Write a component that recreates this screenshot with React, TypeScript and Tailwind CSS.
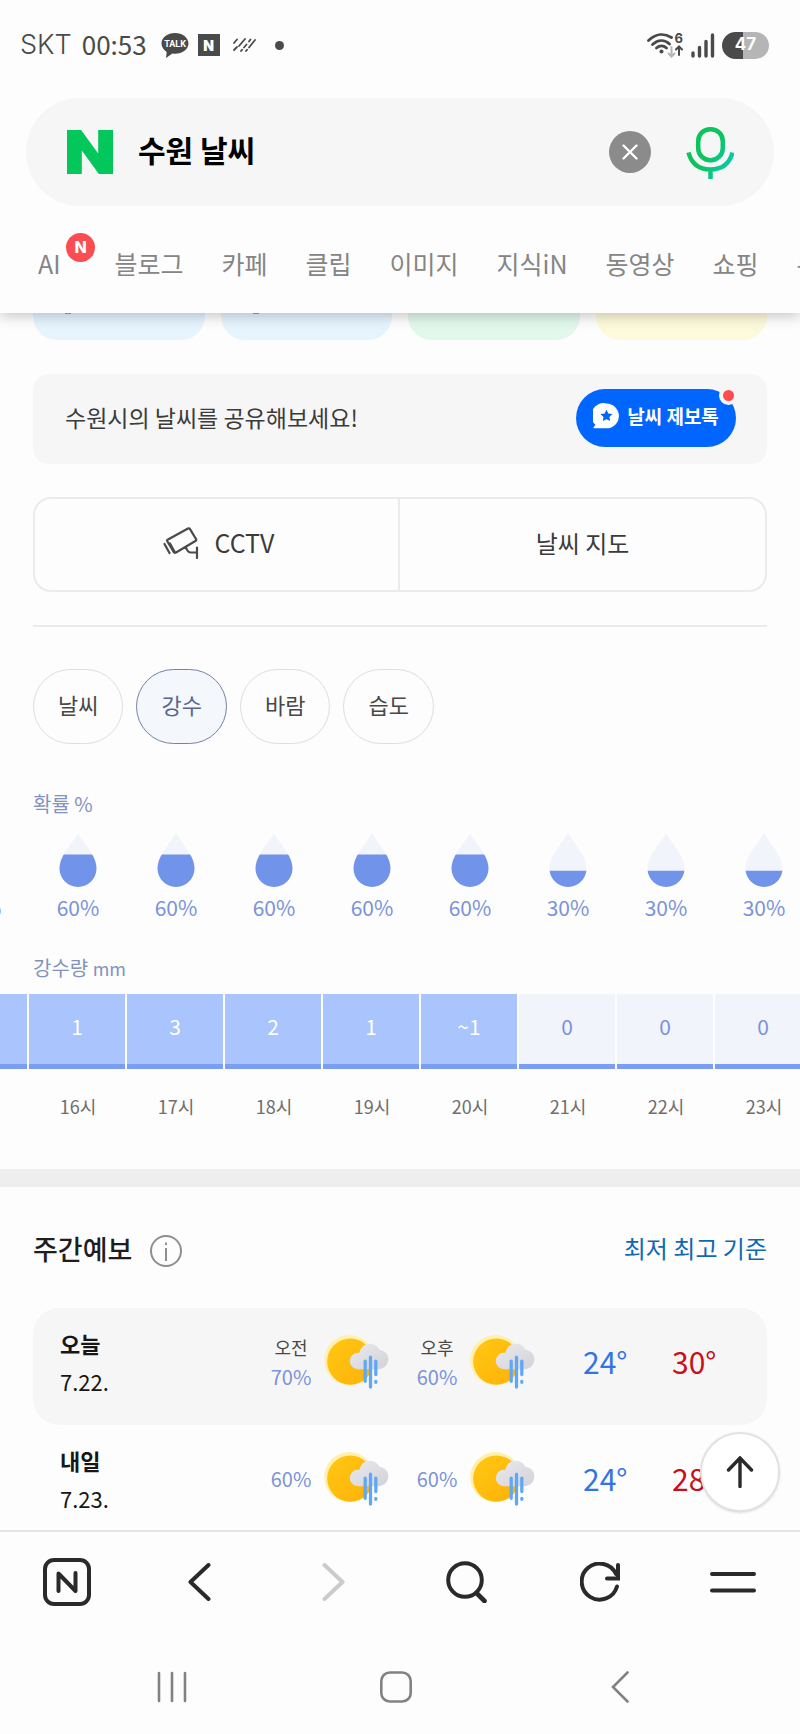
import { useState } from "react";
import { SiNaver } from "react-icons/si";

const TABS = ["블로그", "카페", "클립", "이미지", "지식iN", "동영상", "쇼핑", "뉴스"];

const CHIPS = ["날씨", "강수", "바람", "습도"];

const HOURS = [
  { time: "15시", chance: 60, rain: "1" },
  { time: "16시", chance: 60, rain: "1" },
  { time: "17시", chance: 60, rain: "3" },
  { time: "18시", chance: 60, rain: "2" },
  { time: "19시", chance: 60, rain: "1" },
  { time: "20시", chance: 60, rain: "~1" },
  { time: "21시", chance: 30, rain: "0" },
  { time: "22시", chance: 30, rain: "0" },
  { time: "23시", chance: 30, rain: "0" },
];

const DAYS = [
  { name: "오늘", date: "7.22.", am: 70, pm: 60, low: 24, high: 30, today: true },
  { name: "내일", date: "7.23.", am: 60, pm: 60, low: 24, high: 28, today: false },
];

const StatusBar = () => (
  <div className="flex h-[98px] items-center justify-between pr-[31px] pb-2 pl-[20px] text-[#4a4a4a]">
    <div className="flex items-center">
      <span className="font-['Inter','Noto_Sans_CJK_KR',sans-serif] text-[27px] font-light">SKT</span>
      <span className="ml-[10px] pb-1 text-[26px]">00:53</span>
      <svg className="ml-[14px] h-[27px] w-7" viewBox="0 0 28 27" role="img" aria-label="카카오톡">
        <path d="M14 1C6.500 1 .5 5.600.5 11.500c0 3.600 2.100 6.600 5.200 8.400L5 26l6.300-4.400c.9.100 1.800.2 2.700.2 7.500 0 13.500-4.600 13.500-10.300S21.500 1 14 1z" fill="#4a4a4a" />
        <text x="14" y="15" textAnchor="middle" fontSize="9" fontWeight="700" fill="#fff" fontFamily="Roboto, sans-serif">
          TALK
        </text>
      </svg>
      <span className="ml-[9px] flex size-[22px] items-center justify-center bg-[#4a4a4a] font-['Inter',sans-serif] text-[14px] font-black text-white">
        N
      </span>
      <svg className="ml-3 h-4 w-6" viewBox="0 0 24 16" fill="none" stroke="#4a4a4a" strokeWidth="1.800" strokeLinecap="round">
        <path d="M2 6l3-3.500M2 13l3-3M7 9l6-7M9 14l1-1.200M12 10.500l2.500-3M17 4.500l1.500-2M14 14l1-1.200M17 10.500l6-7.500" />
      </svg>
      <span className="ml-[19px] size-[9px] rounded-full bg-[#4a4a4a]" />
    </div>

    <div className="flex items-center">
      <svg className="h-[28px] w-9" viewBox="0 0 36 28" fill="none" stroke="#4a4a4a" strokeWidth="2.800" strokeLinecap="round">
        <path d="M1.500 9.500c7.500-7.300 16-7.300 23-3M5.500 13.500c5.500-5 12-5 17-.5M9.500 17c3-2.800 7-2.800 10 0" />
        <circle cx="14.500" cy="20.500" r="2" fill="#4a4a4a" stroke="none" />
        <path d="M24.500 16v9M21.500 22.500l3 3 3-3" stroke="#b5b5b5" strokeWidth="2" />
        <path d="M32 24v-8M29 18.500l3-3 3 3" strokeWidth="2" />
        <text x="27.500" y="12" fontSize="13" fontWeight="700" fill="#4a4a4a" stroke="none" fontFamily="Inter, sans-serif">
          6
        </text>
      </svg>
      <svg className="ml-2 h-[27px] w-6" viewBox="0 0 24 27" fill="none" stroke="#4a4a4a" strokeWidth="3.400" strokeLinecap="round">
        <path d="M2 21v3M8.500 15.500V24M15 9.500V24M21.500 3v21" />
      </svg>
      <span className="ml-[7px] flex h-[27px] w-[47px] items-center justify-center rounded-full bg-linear-to-r from-[#4a4a4a] from-45% to-[#b5b5b5] to-45% font-['Inter',sans-serif] text-[17px] font-bold text-white">
        47
      </span>
    </div>
  </div>
);

const SearchBar = () => {
  const [query, setQuery] = useState("수원 날씨");

  return (
    <form className="mx-[26px] flex h-[108px] items-center rounded-full bg-[#f6f6f6] pr-[40px] pl-[41px]">
      <SiNaver className="h-11 w-[46px] shrink-0 text-[#03c75a]" preserveAspectRatio="none" />
      <input
        aria-label="검색어"
        value={query}
        onChange={(e) => setQuery(e.target.value)}
        className="ml-[25px] min-w-0 flex-1 bg-transparent pb-[6px] text-[30px] font-bold text-black outline-none"
      />
      <button
        type="button"
        aria-label="지우기"
        onClick={() => setQuery("")}
        className="flex size-[42px] items-center justify-center rounded-full bg-[#8b8b8b]"
      >
        <svg className="size-4" viewBox="0 0 16 16" fill="none" stroke="#fff" strokeWidth="2.400" strokeLinecap="round">
          <path d="M1.500 1.500l13 13M14.500 1.500l-13 13" />
        </svg>
      </button>
      <button type="button" aria-label="음성 검색" className="ml-[35px]">
        <svg className="h-[53px] w-12" viewBox="0 0 48 53" fill="none" stroke="url(#mic)" strokeWidth="4.500">
          <defs>
            <linearGradient id="mic" gradientUnits="userSpaceOnUse" x1="8" y1="20" x2="46" y2="44">
              <stop offset="0.350" stopColor="#0dc35c" />
              <stop offset="1" stopColor="#06cbb4" />
            </linearGradient>
          </defs>
          <rect x="12.200" y="3.200" width="24.600" height="31" rx="12" />
          <path d="M2.500 26.500C5.500 38 13.500 43.500 24.500 43.500S43.500 38 46.500 26.500M24.500 43.500V53" />
        </svg>
      </button>
    </form>
  );
};

const SearchTabs = () => (
  <nav className="flex h-[107px] items-center gap-[38px] overflow-hidden pt-2 pl-[38px] text-[25px] whitespace-nowrap text-[#858585]">
    <a href="#ai" className="relative mr-4">
      AI
      <span className="absolute -top-3 left-7 flex size-[29px] items-center justify-center rounded-full bg-[#fb4c51] font-['Inter',sans-serif] text-[16px] font-extrabold text-white">
        N
      </span>
    </a>
    {TABS.map((tab) => (
      <a key={tab} href={`#${tab}`}>
        {tab}
      </a>
    ))}
  </nav>
);

const SummaryCards = () => (
  <div className="grid h-[27px] grid-cols-4 gap-4">
    <div className="rounded-b-[24px] bg-[#e6f4fe] pl-8">
      <span className="block h-px w-[6px] bg-gray-400" />
    </div>
    <div className="rounded-b-[24px] bg-[#e6f4fe] pl-8">
      <span className="block h-px w-[6px] bg-gray-400" />
    </div>
    <div className="rounded-b-[24px] bg-[#e2f8eb]" />
    <div className="rounded-b-[24px] bg-[#fdfadb]" />
  </div>
);

const ShareBanner = () => (
  <div className="mt-[34px] flex h-[90px] items-center justify-between rounded-2xl bg-[#f6f6f6] pr-[31px] pb-[2px] pl-8">
    <p className="pb-[2px] text-[23px] text-[#3b3b3b]">수원시의 날씨를 공유해보세요!</p>
    <a href="#talk" className="relative flex h-[58px] w-[160px] items-center justify-center gap-2 rounded-full bg-[#0066ff] pb-1 text-[19px] font-bold text-white">
      <svg className="size-[26px]" viewBox="0 0 26 26">
        <path d="M13.500 0.500a12.300 12.300 0 1 1 0 24.800H1.200c-.7 0-.9-.7-.5-1.200l1.800-2.300A12.300 12.300 0 0 1 13.500.5z" fill="#fff" />
        <path d="M13.500 6.800l1.800 3.700 4.100.6-3 2.900.7 4.100-3.600-1.900-3.700 1.900.7-4.100-3-2.900 4.100-.6z" fill="#0066ff" />
      </svg>
      날씨 제보톡
      <span className="absolute -top-[3px] -right-[2px] size-[19px] rounded-full border-4 border-[#f6f6f6] bg-[#fb4c51]" />
    </a>
  </div>
);

const LinkButtons = () => (
  <div className="mt-[33px] grid h-[95px] grid-cols-2 divide-x-2 divide-[#ebebeb] rounded-[18px] border-2 border-[#ebebeb] text-[24px] text-[#3b3b3b]">
    <a href="#cctv" className="flex items-center justify-center gap-4 pb-1 pl-1">
      <svg className="h-8 w-9" viewBox="0 0 36 32" fill="none" stroke="#4a4a4a" strokeWidth="2.200" strokeLinecap="round" strokeLinejoin="round">
        <path d="M5 12.500L25 1.500q1.300-.6 2 .6L33 12q.6 1.300-.6 2L13 25.500q-1.500.8-2.300-.6L4.300 14.300q-.6-1.200.7-1.800zM1.500 17l5 9M7 16.500l5 9M23 20.500q1.500 5 5 5h5.500M34 20.500V31" />
      </svg>
      <span className="text-[25px]">CCTV</span>
    </a>
    <a href="#map" className="flex items-center justify-center pb-1">
      날씨 지도
    </a>
  </div>
);

const Chips = () => {
  const [active, setActive] = useState("강수");

  return (
    <div className="mt-[42px] flex gap-[13px]">
      {CHIPS.map((chip) => (
        <button
          key={chip}
          type="button"
          aria-pressed={chip === active}
          onClick={() => setActive(chip)}
          className={`h-[75px] rounded-full border px-6 pb-1 text-[22px] ${
            chip === active
              ? "border-[#7482a8] bg-[#f4f7fc] text-[#59648a]"
              : "border-[#dedede] text-[#484848]"
          }`}
        >
          {chip}
        </button>
      ))}
    </div>
  );
};

const Drop = ({ chance }: { chance: number }) => {
  const level = 54 - (54 * chance) / 100;
  return (
    <svg className="h-[54px] w-[38px]" viewBox="0 0 38 54">
      <clipPath id={`fill-${chance}`}>
        <rect x="0" y={level} width="38" height="54" />
      </clipPath>
      <path d="M19 0C14 10 .5 22 .5 35.500a18.500 18.500 0 0 0 37 0C37.500 22 24 10 19 0z" fill="#f1f4fb" />
      <path d="M19 0C14 10 .5 22 .5 35.500a18.500 18.500 0 0 0 37 0C37.500 22 24 10 19 0z" fill="#7194ea" clipPath={`url(#fill-${chance})`} />
    </svg>
  );
};

const HourlyRain = () => (
  <section className="overflow-hidden">
    <h3 className="mt-12 px-[33px] text-[20px] leading-6 text-[#8292bd]">확률 %</h3>
    <ul className="mt-[17px] -ml-[69px] flex">
      {HOURS.map((hour) => (
        <li key={hour.time} className="flex w-[98px] shrink-0 flex-col items-center gap-2 text-[21px] leading-6 text-[#7b93d9]">
          <Drop chance={hour.chance} />
          {hour.chance}%
        </li>
      ))}
    </ul>

    <h3 className="mt-[37px] px-[33px] text-[20px] leading-6 text-[#8292bd]">
      강수량 <span className="text-[18px]">mm</span>
    </h3>
    <ul className="mt-[14px] -ml-[69px] flex">
      {HOURS.map((hour) => (
        <li
          key={hour.time}
          className={`flex h-[75px] w-[98px] shrink-0 items-center justify-center border-r-2 border-r-[#fdfdfd] text-[21px] shadow-[inset_0_-5px_0_#7a9df5] ${
            hour.rain === "0" ? "bg-[#f1f4fb] text-[#7b93d9]" : "bg-[#aac4fd] text-white"
          } pb-[10px]`}
        >
          {hour.rain}
        </li>
      ))}
    </ul>
    <ul className="mt-[25px] -ml-[69px] flex">
      {HOURS.map((hour) => (
        <li key={hour.time} className="w-[98px] shrink-0 text-center text-[18px] leading-6 text-[#6e6e6e]">
          {hour.time}
        </li>
      ))}
    </ul>
  </section>
);

const SunRain = () => (
  <svg className="h-[54px] w-[66px] shrink-0" viewBox="0 0 68 56">
    <defs>
      <linearGradient id="sun" x1="0" y1="0" x2="1" y2="1">
        <stop offset="0" stopColor="#ffc812" />
        <stop offset="1" stopColor="#ffb10a" />
      </linearGradient>
      <linearGradient id="cloud" x1="0" y1="0" x2="1" y2="1">
        <stop offset="0" stopColor="#e9e9ee" />
        <stop offset="1" stopColor="#d2d2d8" />
      </linearGradient>
    </defs>
    <circle cx="26" cy="26" r="26" fill="#fff0ae" />
    <circle cx="27" cy="27.500" r="24" fill="url(#sun)" />
    <path d="M35 35.500a8.500 8.500 0 0 1 0-17h1.500C38 12 42 9 47 9c5 0 8.500 2.500 10.500 6.500C63 16 66.500 20 66.500 25c0 6-4.500 10.500-10.500 10.500z" fill="url(#cloud)" />
    <g stroke="#5fa8f8" strokeWidth="3.400" strokeLinecap="round">
      <path d="M42.500 27v21M48 23v31M53.500 27v14M53.500 48v1" />
    </g>
  </svg>
);

const HalfDay = ({ label, chance, showLabel }: { label: string; chance: number; showLabel: boolean }) => (
  <div className="flex items-center gap-3">
    <div className="flex w-[42px] flex-col items-center gap-[6px] text-[20px] leading-6 text-[#7b93d9]">
      {showLabel && <span className="text-[18px] text-[#484848]">{label}</span>}
      <span>{chance}%</span>
    </div>
    <SunRain />
  </div>
);

const WeeklyForecast = () => (
  <section className="px-[33px] pt-[44px]">
    <div className="flex h-9 items-center justify-between">
      <div className="flex items-center gap-[18px]">
        <h2 className="text-[27px] leading-9 font-medium text-[#1e1e1e]">주간예보</h2>
        <button type="button" aria-label="도움말">
          <svg className="mt-1 size-8" viewBox="0 0 32 32" fill="none" stroke="#8e8e8e" strokeWidth="2">
            <circle cx="16" cy="16" r="15" />
            <path d="M16 13v13M16 7.500v2.500" />
          </svg>
        </button>
      </div>
      <a href="#base" className="pb-[2px] text-[24px] leading-9 text-[#0f68b4]">
        최저 최고 기준
      </a>
    </div>

    <ul className="mt-[41px]">
      {DAYS.map((day) => (
        <li
          key={day.name}
          className={`flex h-[117px] items-center rounded-[26px] pr-[49px] pb-[10px] pl-[27px] ${day.today ? "bg-[#f6f6f6]" : ""}`}
        >
          <div className="flex-1 text-[#161616]">
            <p className="text-[22px] leading-[38px] font-bold">{day.name}</p>
            <p className="text-[22px] leading-[38px]">{day.date}</p>
          </div>
          <div className="flex items-center gap-[26px]">
            <HalfDay label="오전" chance={day.am} showLabel={day.today} />
            <HalfDay label="오후" chance={day.pm} showLabel={day.today} />
          </div>
          <span className="ml-[47px] w-[46px] text-[30px] whitespace-nowrap text-[#3374e4]">{day.low}°</span>
          <span className="ml-[43px] w-[46px] text-[30px] whitespace-nowrap text-[#c9101a]">{day.high}°</span>
        </li>
      ))}
    </ul>
  </section>
);

const BottomNav = () => (
  <footer className="relative border-t-2 border-[#e4e4e4] bg-[#fdfdfd]">
    <button
      type="button"
      aria-label="맨 위로"
      className="absolute right-5 bottom-full mb-5 flex size-20 items-center justify-center rounded-full border-2 border-[#e2e2e2] bg-white shadow-sm"
    >
      <svg className="h-8 w-7" viewBox="0 0 28 32" fill="none" stroke="#2a2a2a" strokeWidth="3.400" strokeLinecap="round">
        <path d="M14 2v28.500M2.500 14L14 2l11.500 12" />
      </svg>
    </button>

    <div className="grid h-[104px] grid-cols-6 place-items-center pb-1 text-[#2a2a2a]">
      <button type="button" aria-label="네이버 홈">
        <svg className="size-12" viewBox="0 0 48 48" fill="none" stroke="currentColor" strokeWidth="4" strokeLinecap="round" strokeLinejoin="round">
          <rect x="2" y="2" width="44" height="44" rx="9" />
          <path d="M15.500 33V15.500l17 17.500V15" />
        </svg>
      </button>
      <button type="button" aria-label="뒤로">
        <svg className="h-[38px] w-6" viewBox="0 0 24 38" fill="none" stroke="currentColor" strokeWidth="4" strokeLinecap="round" strokeLinejoin="round">
          <path d="M20.500 2L2.500 19l18 17" />
        </svg>
      </button>
      <button type="button" aria-label="앞으로" disabled className="text-[#cbcbcb]">
        <svg className="h-[38px] w-6" viewBox="0 0 24 38" fill="none" stroke="currentColor" strokeWidth="4" strokeLinecap="round" strokeLinejoin="round">
          <path d="M3.500 2l18 17-18 17" />
        </svg>
      </button>
      <button type="button" aria-label="검색">
        <svg className="h-[42px] w-[41px]" viewBox="0 0 41 42" fill="none" stroke="currentColor" strokeWidth="4" strokeLinecap="round">
          <circle cx="19" cy="19" r="16.800" />
          <path d="M30.500 32l8 8" strokeWidth="4.600" />
        </svg>
      </button>
      <button type="button" aria-label="새로고침">
        <svg className="size-10" viewBox="0 0 40 40" fill="none" stroke="currentColor" strokeWidth="4" strokeLinecap="round">
          <path d="M37 24.500A18 18 0 1 1 36 12" />
          <path d="M38 3v13.500H27" />
        </svg>
      </button>
      <button type="button" aria-label="메뉴">
        <svg className="h-[22px] w-[46px]" viewBox="0 0 46 22" fill="none" stroke="currentColor" strokeWidth="4" strokeLinecap="round">
          <path d="M2 3h42M2 19.500h42" />
        </svg>
      </button>
    </div>

    <div className="grid h-[98px] grid-cols-3 place-items-center pt-1 pr-[68px] pl-[60px] text-[#828282]">
      <button type="button" aria-label="최근 앱">
        <svg className="size-8" viewBox="0 0 32 32" fill="none" stroke="currentColor" strokeWidth="2.600" strokeLinecap="round">
          <path d="M3 2v28M16 2v28M29 2v28" />
        </svg>
      </button>
      <button type="button" aria-label="홈">
        <svg className="size-8" viewBox="0 0 32 32" fill="none" stroke="currentColor" strokeWidth="2.600">
          <rect x="1.300" y="1.500" width="29.400" height="29" rx="8.500" />
        </svg>
      </button>
      <button type="button" aria-label="이전">
        <svg className="h-8 w-[18px]" viewBox="0 0 18 32" fill="none" stroke="currentColor" strokeWidth="2.600" strokeLinecap="round">
          <path d="M16.500 1.500L2 16l14.500 14.500" />
        </svg>
      </button>
    </div>
  </footer>
);

export default function App() {
  return (
    <div className="flex h-screen flex-col overflow-hidden bg-[#fdfdfd] font-['Noto_Sans_CJK_KR',sans-serif]">
      <header className="relative z-10 bg-[#fdfdfd] shadow-[0_4px_12px_rgba(0,0,0,0.2)]">
        <StatusBar />
        <SearchBar />
        <SearchTabs />
      </header>

      <main className="min-h-0 flex-1 overflow-hidden">
        <div className="px-[33px]">
          <SummaryCards />
          <ShareBanner />
          <LinkButtons />
          <hr className="mt-[33px] border-t-2 border-[#ebebeb]" />
          <Chips />
        </div>
        <HourlyRain />
        <div className="mt-[51px] h-[18px] bg-[#eeeeee]" />
        <WeeklyForecast />
      </main>

      <BottomNav />
    </div>
  );
}
